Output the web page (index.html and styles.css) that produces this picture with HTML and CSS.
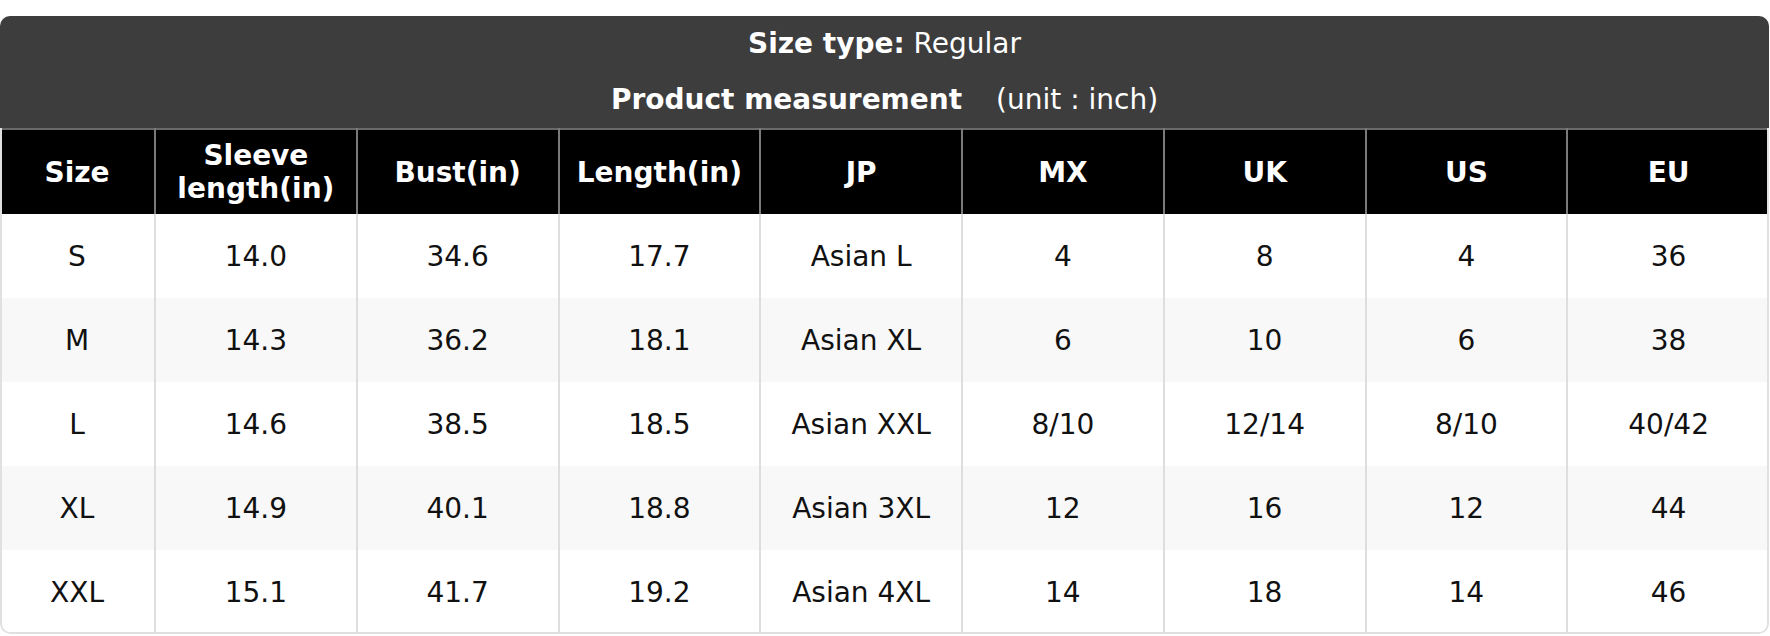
FILE: index.html
```html
<!DOCTYPE html>
<html lang="en">
<head>
<meta charset="utf-8">
<title>Size chart</title>
<link rel="stylesheet" href="styles.css">
</head>
<body>
<div class="page">
  <div class="chart">
    <div class="chart-head">
      <p class="head-line"><strong>Size type:</strong> Regular</p>
      <p class="head-line"><strong>Product measurement</strong><span class="unit">(unit : inch)</span></p>
    </div>
    <table class="size-table">
      <colgroup>
        <col class="col-size">
        <col span="8">
      </colgroup>
      <thead>
        <tr>
          <th>Size</th>
          <th>Sleeve length(in)</th>
          <th>Bust(in)</th>
          <th>Length(in)</th>
          <th>JP</th>
          <th>MX</th>
          <th>UK</th>
          <th>US</th>
          <th>EU</th>
        </tr>
      </thead>
      <tbody>
        <tr><td>S</td><td>14.0</td><td>34.6</td><td>17.7</td><td>Asian L</td><td>4</td><td>8</td><td>4</td><td>36</td></tr>
        <tr><td>M</td><td>14.3</td><td>36.2</td><td>18.1</td><td>Asian XL</td><td>6</td><td>10</td><td>6</td><td>38</td></tr>
        <tr><td>L</td><td>14.6</td><td>38.5</td><td>18.5</td><td>Asian XXL</td><td>8/10</td><td>12/14</td><td>8/10</td><td>40/42</td></tr>
        <tr><td>XL</td><td>14.9</td><td>40.1</td><td>18.8</td><td>Asian 3XL</td><td>12</td><td>16</td><td>12</td><td>44</td></tr>
        <tr><td>XXL</td><td>15.1</td><td>41.7</td><td>19.2</td><td>Asian 4XL</td><td>14</td><td>18</td><td>14</td><td>46</td></tr>
      </tbody>
    </table>
  </div>
</div>
</body>
</html>
```

FILE: styles.css
```css
* { box-sizing: border-box; }

html, body {
  margin: 0;
  padding: 0;
  background: #ffffff;
}

body {
  font-family: "DejaVu Sans", Verdana, sans-serif;
  font-size: 28px;
  color: #111111;
}

.page {
  padding: 16px 1px 0 0;
}

.chart {
  position: relative;
  width: 1769px;
  border-radius: 10px;
  overflow: hidden;
  background: #ffffff;
}

.chart::after {
  content: "";
  position: absolute;
  left: 0;
  right: 0;
  top: 112px;
  bottom: 0;
  border: 2px solid #e0e0e0;
  border-top: 0;
  border-radius: 0 0 10px 10px;
  pointer-events: none;
}

.chart-head {
  background: #3d3d3d;
  color: #ffffff;
  padding: 11px 0 11px;
  display: flex;
  flex-direction: column;
  align-items: center;
  gap: 22px;
}

.head-line {
  margin: 0;
  line-height: 34px;
  white-space: pre;
}

.head-line strong {
  font-weight: bold;
}

.unit {
  margin-left: 34px;
}

.size-table {
  width: 100%;
  table-layout: fixed;
  border-collapse: collapse;
}

.col-size {
  width: 155px;
}

.size-table th {
  background: #000000;
  color: #ffffff;
  font-weight: bold;
  line-height: 33px;
  height: 85px;
  padding: 0 8px;
  text-align: center;
  border-top: 2px solid #6a6a6a;
  border-left: 2px solid #7a7a7a;
  border-right: 2px solid #7a7a7a;
}

.size-table td {
  height: 84px;
  padding: 0 8px;
  text-align: center;
  border-left: 2px solid #dedede;
  border-right: 2px solid #dedede;
  color: #111111;
}

.size-table th:first-child,
.size-table td:first-child {
  border-left: 0;
}

.size-table th:last-child,
.size-table td:last-child {
  border-right: 0;
}

.size-table tbody tr:nth-child(even) td {
  background: #f8f8f8;
}
```
